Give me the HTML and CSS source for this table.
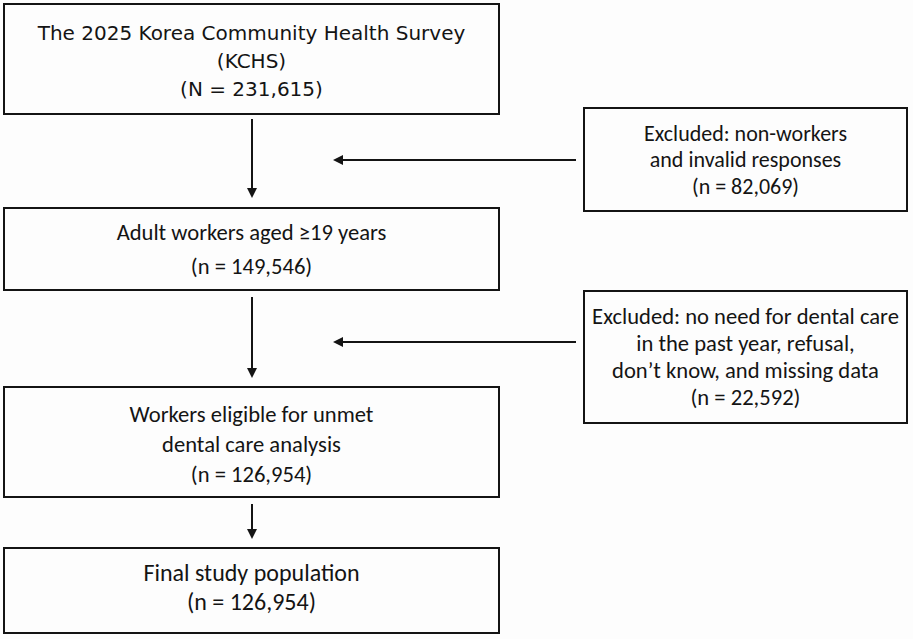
FILE: index.html
```html
<!DOCTYPE html>
<html lang="en">
<head>
<meta charset="utf-8">
<title>KCHS study flow</title>
<link rel="stylesheet" href="styles.css">
</head>
<body>
<div class="chart">
  <div class="main-col">
    <div class="box box-survey">
      <p>The 2025 Korea Community Health Survey<br>(KCHS)<br>(N = 231,615)</p>
    </div>
    <div class="varrow varrow-1"><span class="shaft"></span></div>
    <div class="box box-adult">
      <p>Adult workers aged ≥19 years<br>(n = 149,546)</p>
    </div>
    <div class="varrow varrow-2"><span class="shaft"></span></div>
    <div class="box box-eligible">
      <p>Workers eligible for unmet<br>dental care analysis<br>(n = 126,954)</p>
    </div>
    <div class="varrow varrow-3"><span class="shaft"></span></div>
    <div class="box box-final">
      <p>Final study population<br>(n = 126,954)</p>
    </div>
  </div>
  <div class="side-col">
    <div class="excl-row excl-row-1">
      <div class="harrow"><span class="shaft"></span></div>
      <div class="box box-excl box-excl-1">
        <p>Excluded: non-workers<br>and invalid responses<br>(n = 82,069)</p>
      </div>
    </div>
    <div class="excl-row excl-row-2">
      <div class="harrow"><span class="shaft"></span></div>
      <div class="box box-excl box-excl-2">
        <p>Excluded: no need for dental care<br>in the past year, refusal,<br>don’t know, and missing data<br>(n = 22,592)</p>
      </div>
    </div>
  </div>
</div>
</body>
</html>
```

FILE: styles.css
```css
html, body {
  margin: 0;
  padding: 0;
  background: #fdfdfd;
}

body {
  color: #141414;
  font-family: Carlito, Lato, "Open Sans", sans-serif;
  font-size: 22.6px;
}

.chart {
  display: grid;
  grid-template-columns: 330px 167px 408px;
  padding: 3px 0 0 3px;
}

.main-col {
  grid-column: 1 / 3;
  grid-row: 1;
  display: flex;
  flex-direction: column;
}

.side-col {
  grid-column: 2 / 4;
  grid-row: 1;
  display: flex;
  flex-direction: column;
  padding-top: 104px;
}

.box {
  box-sizing: border-box;
  border: 2px solid #141414;
  display: flex;
  align-items: center;
  justify-content: center;
  text-align: center;
}

.box p {
  margin: 0;
}

.box-survey {
  height: 112px;
  padding-top: 4px;
  font-family: "DejaVu Sans", Verdana, sans-serif;
  font-size: 20px;
  line-height: 28px;
}

.box-adult {
  height: 84px;
  line-height: 34px;
}

.box-eligible {
  height: 112px;
  line-height: 30px;
  padding-top: 3px;
}

.box-final {
  height: 87px;
  font-size: 24px;
  line-height: 29px;
  padding-bottom: 7px;
}

.varrow {
  display: flex;
  flex-direction: column;
  align-items: center;
  box-sizing: border-box;
}

.varrow .shaft {
  width: 2px;
  flex: 1;
  background: #141414;
}

.varrow::after {
  content: "";
  width: 0;
  height: 0;
  border-left: 5px solid transparent;
  border-right: 5px solid transparent;
  border-top: 10px solid #141414;
}

.varrow-1 {
  height: 92px;
  padding: 4px 0 9px;
}

.varrow-2 {
  height: 95px;
  padding: 6px 0 8px;
}

.varrow-3 {
  height: 49px;
  padding: 6px 0 8px;
}

.excl-row {
  display: flex;
  gap: 7px;
}

.excl-row-1 {
  align-items: center;
}

.excl-row-2 {
  margin-top: 78px;
  align-items: flex-start;
}

.excl-row-2 .harrow {
  margin-top: 47px;
}

.harrow {
  flex: 1;
  height: 10px;
  display: flex;
  align-items: center;
}

.harrow::before {
  content: "";
  width: 0;
  height: 0;
  border-top: 5px solid transparent;
  border-bottom: 5px solid transparent;
  border-right: 10px solid #141414;
}

.harrow .shaft {
  flex: 1;
  height: 2px;
  background: #141414;
}

.box-excl {
  width: 325px;
  flex: none;
}

.box-excl-1 {
  height: 105px;
  font-size: 22px;
  line-height: 26.5px;
  padding-top: 2px;
}

.box-excl-2 {
  height: 134px;
  line-height: 27.2px;
}
```
